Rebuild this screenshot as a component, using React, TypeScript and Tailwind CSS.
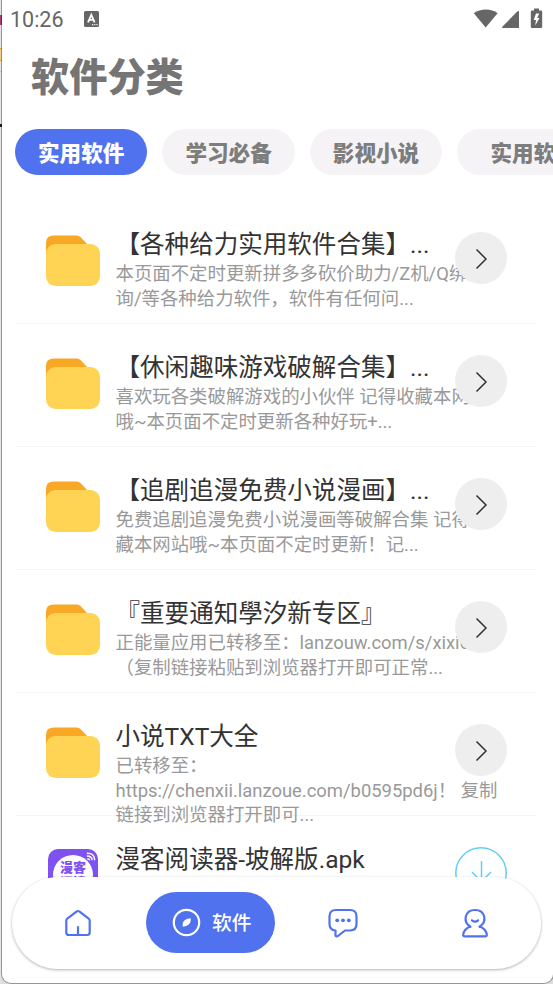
import React from "react";
import clsx from "clsx";

type Item = {
  title: string;
  lines: string[];
  kind: "folder" | "apk";
};

const tabs = ["实用软件", "学习必备", "影视小说", "实用软件"];

const items: Item[] = [
  {
    title: "【各种给力实用软件合集】...",
    lines: ["本页面不定时更新拼多多砍价助力/Z机/Q绑查", "询/等各种给力软件，软件有任何问..."],
    kind: "folder",
  },
  {
    title: "【休闲趣味游戏破解合集】...",
    lines: ["喜欢玩各类破解游戏的小伙伴 记得收藏本网站", "哦~本页面不定时更新各种好玩+..."],
    kind: "folder",
  },
  {
    title: "【追剧追漫免费小说漫画】...",
    lines: ["免费追剧追漫免费小说漫画等破解合集 记得收", "藏本网站哦~本页面不定时更新！记..."],
    kind: "folder",
  },
  {
    title: "『重要通知學汐新专区』",
    lines: ["正能量应用已转移至：lanzouw.com/s/xixi6", "（复制链接粘贴到浏览器打开即可正常..."],
    kind: "folder",
  },
  {
    title: "小说TXT大全",
    lines: ["已转移至：", "https://chenxii.lanzoue.com/b0595pd6j！ 复制", "链接到浏览器打开即可..."],
    kind: "folder",
  },
  { title: "漫客阅读器-坡解版.apk", lines: [], kind: "apk" },
];

const StatusBar = () => (
  <div className="flex h-[38px] shrink-0 items-center pl-2 text-[#666]">
    <span className="pt-0.5 text-[21.500px] leading-none">10:26</span>
    <svg className="ml-[20px] -mt-px h-4 w-[15px]" viewBox="0 0 15 16">
      <rect width="15" height="16" rx="1.500" fill="#666" />
      <path d="M4 11.300 7.300 3.800 10.600 11.300M5.200 8.800h4.200" fill="none" stroke="#fff" strokeWidth="1.800" />
      <path d="M8 13.600h1.200M10.200 13.600h1.200M12.400 13.600h1.200" stroke="#fff" strokeWidth="1.100" />
    </svg>
    <svg className="-mt-0.5 ml-auto mr-[10px] h-[21px] w-[70px]" viewBox="0 0 70 21" fill="#666">
      <path d="M.8 5.200C7.500 .2 18.500 .2 24.600 5.200L12.700 19.500Z" />
      <path d="M46 3.500V20H30.200q-1.700 0-.7-1.400L44.500 3.300q1.500-1 1.500.4Z" />
      <path d="M61 0.500h5v2h2q1.200 0 1.200 1.200v15q0 1.300-1.200 1.300h-9q-1.200 0-1.200-1.200V3.700q0-1.200 1.200-1.200h2Z" />
      <path d="M63 5.500 60.700 12h2.300l-.8 5.500 4.300-7.500h-2.300l2-4.500Z" fill="#fff" />
    </svg>
  </div>
);

const FolderIcon = () => (
  <svg className="h-[52px] w-[54px]" viewBox="0 0 54 52">
    <path d="M0 30V7.500Q0 .5 8 .5H31q2 0 3.500 1.500l7 7.500V30Z" fill="#f9a825" />
    <rect y="9" width="54" height="42" rx="9.500" fill="#ffd454" />
  </svg>
);

const ReaderIcon = () => (
  <div className="relative ml-0.5 h-[50px] w-[50px] overflow-hidden rounded-[10px] bg-[#7f51f1]">
    <div className="mx-auto mt-1.5 h-[40px] w-[40px] rounded-full bg-white pt-[5px] text-center text-[13px] font-black leading-[15px] text-[#7f51f1]">
      漫客
      <br />
      阅读
    </div>
    <svg className="absolute right-[2px] top-[3px] h-[10px] w-[10px]" viewBox="0 0 12 12" fill="none" stroke="#fff" strokeWidth="1.700">
      <path d="M1 1.500Q10 1 10.500 10M1 4.700q6 0 6.500 5M1.500 8q2.500 0 3 2" />
    </svg>
  </div>
);

const Row = ({ item }: { item: Item }) => (
  <div className="flex h-[123px] shrink-0 border-b border-[#f4f4f4] pl-[31px]">
    <div className={clsx("w-[69.500px] shrink-0", item.kind === "folder" ? "pt-[34px]" : "pt-[33px]")}>
      {item.kind === "folder" ? <FolderIcon /> : <ReaderIcon />}
    </div>
    <div className="w-[339.500px] shrink-0 whitespace-nowrap pt-[28px]">
      <h2 className="text-[24.550px] leading-[31px] text-[#333]">{item.title}</h2>
      <p className="pt-0.5 text-[18.420px] leading-[24.500px] text-[#999]">
        {item.lines.map((line) => (
          <span key={line} className="block">
            {line}
          </span>
        ))}
      </p>
    </div>
    {item.kind === "folder" ? (
      <div className={clsx("mt-[31px] h-[52px] w-[52px] shrink-0 rounded-full bg-[#eee]", item.lines.length < 3 && "z-10")}>
        <svg className="h-[52px] w-[52px]" viewBox="0 0 52 52" fill="none" stroke="#333" strokeWidth="1.500">
          <path d="M21.500 17.500 31 27 21.500 36.500" />
        </svg>
      </div>
    ) : (
      <svg className="mt-[31px] h-[52px] w-[52px] shrink-0" viewBox="0 0 52 52" fill="none" stroke="#62cdf8" strokeWidth="1.500">
        <circle cx="26" cy="26" r="25.200" />
        <path d="M26.500 14v21M17 25l9.500 9.500L36 25" />
      </svg>
    )}
  </div>
);

const BottomNav = () => (
  <nav className="absolute bottom-[14px] left-[10px] z-20 flex h-[92px] w-[529px] items-center rounded-[46px] bg-white shadow-[0_1px_3px_rgba(0,0,0,0.3)]">
    <div className="flex w-[134px] justify-center">
      <svg className="mr-[1.500px] h-7 w-7" viewBox="0 0 28 28" fill="none" stroke="#5072ee" strokeWidth="2.200" strokeLinecap="round" strokeLinejoin="round">
        <path d="M2.300 11.500q0-1.200 1-1.900L12.800 2.400q1.200-.8 2.400 0l9.500 7.200q1 .7 1 1.900V23.500q0 2.500-2.500 2.500H4.800q-2.500 0-2.500-2.500ZM14 18v7.500" />
      </svg>
    </div>
    <div className="-mt-px flex h-[61px] w-[129px] items-center rounded-[31px] bg-[#5072ee] pl-[26px] text-white">
      <svg className="h-[29px] w-[29px]" viewBox="0 0 29 29">
        <circle cx="14.500" cy="14.500" r="12.700" fill="none" stroke="#fff" strokeWidth="2.200" />
        <path d="M18.800 10.200q0 5-2.500 6.600-1.300 1.500-5.600 2-.5-5 2-6.500 1.500-1.600 6.100-2.100Z" fill="#fff" />
      </svg>
      <span className="ml-[11px] pt-0.5 text-[19.800px] font-medium">软件</span>
    </div>
    <div className="flex w-[134px] justify-center">
      <svg className="ml-[1.500px] h-[30px] w-[30px]" viewBox="0 0 30 30" fill="none" stroke="#5072ee" strokeWidth="2.200" strokeLinejoin="round">
        <path d="M8 2H22q6.500 0 6.500 6.500v7.500q0 6.500-6.500 6.500h-5L10 28q-1.300 1-2.500-.3V22.500Q1.500 22 1.500 16V8.500Q1.500 2 8 2Z" />
        <g fill="#5072ee" stroke="none">
          <circle cx="9.200" cy="12.300" r="1.900" />
          <circle cx="15" cy="12.300" r="1.900" />
          <circle cx="20.800" cy="12.300" r="1.900" />
        </g>
      </svg>
    </div>
    <div className="flex w-[132px] justify-center">
      <svg className="h-[30px] w-[28px]" viewBox="0 0 28 30" fill="none" stroke="#5072ee" strokeWidth="2.200" strokeLinecap="round" strokeLinejoin="round">
        <path d="M9.500 18.800C1.500 14 3.500 2 14 2S26.500 14 18.500 18.800M8.500 18.800Q3 21.500 2.200 26.500 2 28.400 3.700 28.400H24.300Q26 28.400 25.800 26.500 25 21.500 19.500 18.800M10.900 12.300q3.100 2.600 6.200 0" />
      </svg>
    </div>
  </nav>
);

// sliver of the desktop visible to the left of the emulator window
const DesktopEdge = () => (
  <div className="flex h-full w-0.5 shrink-0 flex-col bg-[#e2e2e2]">
    <div className="mt-[15px] h-[10px] shrink-0 bg-[#a83a72]" />
    <div className="mt-[23px] h-[13px] shrink-0 border-y border-[#eda52c] bg-[#efcf8f]" />
    <div className="mt-[10px] h-px shrink-0 bg-[#c4c4c4]" />
    <div className="mt-[52px] h-[3px] shrink-0 bg-[#1c1c28]" />
  </div>
);

const App = () => (
  <div className="flex h-[984px] w-[553px] overflow-hidden bg-[#dedede] font-[Roboto,'Noto_Sans_CJK_SC',sans-serif]">
    <DesktopEdge />
    <main className="relative flex h-[983px] w-[551px] flex-col overflow-hidden rounded-b-[9px] bg-white shadow-[0_0_0_1px_rgba(0,0,0,0.32)]">
      <StatusBar />
      <h1 className="h-[91px] shrink-0 pl-[29px] pt-0.5 text-[38.200px] font-black leading-[77px] text-[#757575]">软件分类</h1>
      <div className="flex h-[46px] shrink-0 gap-[15px] pl-[13px]">
        {tabs.map((tab, i) => (
          <button
            key={i}
            className={clsx(
              "h-[46px] shrink-0 rounded-full pt-1 text-[21.600px] font-black",
              i === 0 ? "bg-[#5072ee] text-white" : "bg-[#f6f3f7] text-[#7d7d7d]",
              i === 3 ? "w-[153px]" : "w-[132.400px]"
            )}
          >
            {tab}
          </button>
        ))}
      </div>
      <div className="ml-[13px] mr-4 mt-[26px] flex flex-col">
        {items.map((item) => (
          <Row key={item.title} item={item} />
        ))}
      </div>
      <BottomNav />
    </main>
  </div>
);

export default App;
